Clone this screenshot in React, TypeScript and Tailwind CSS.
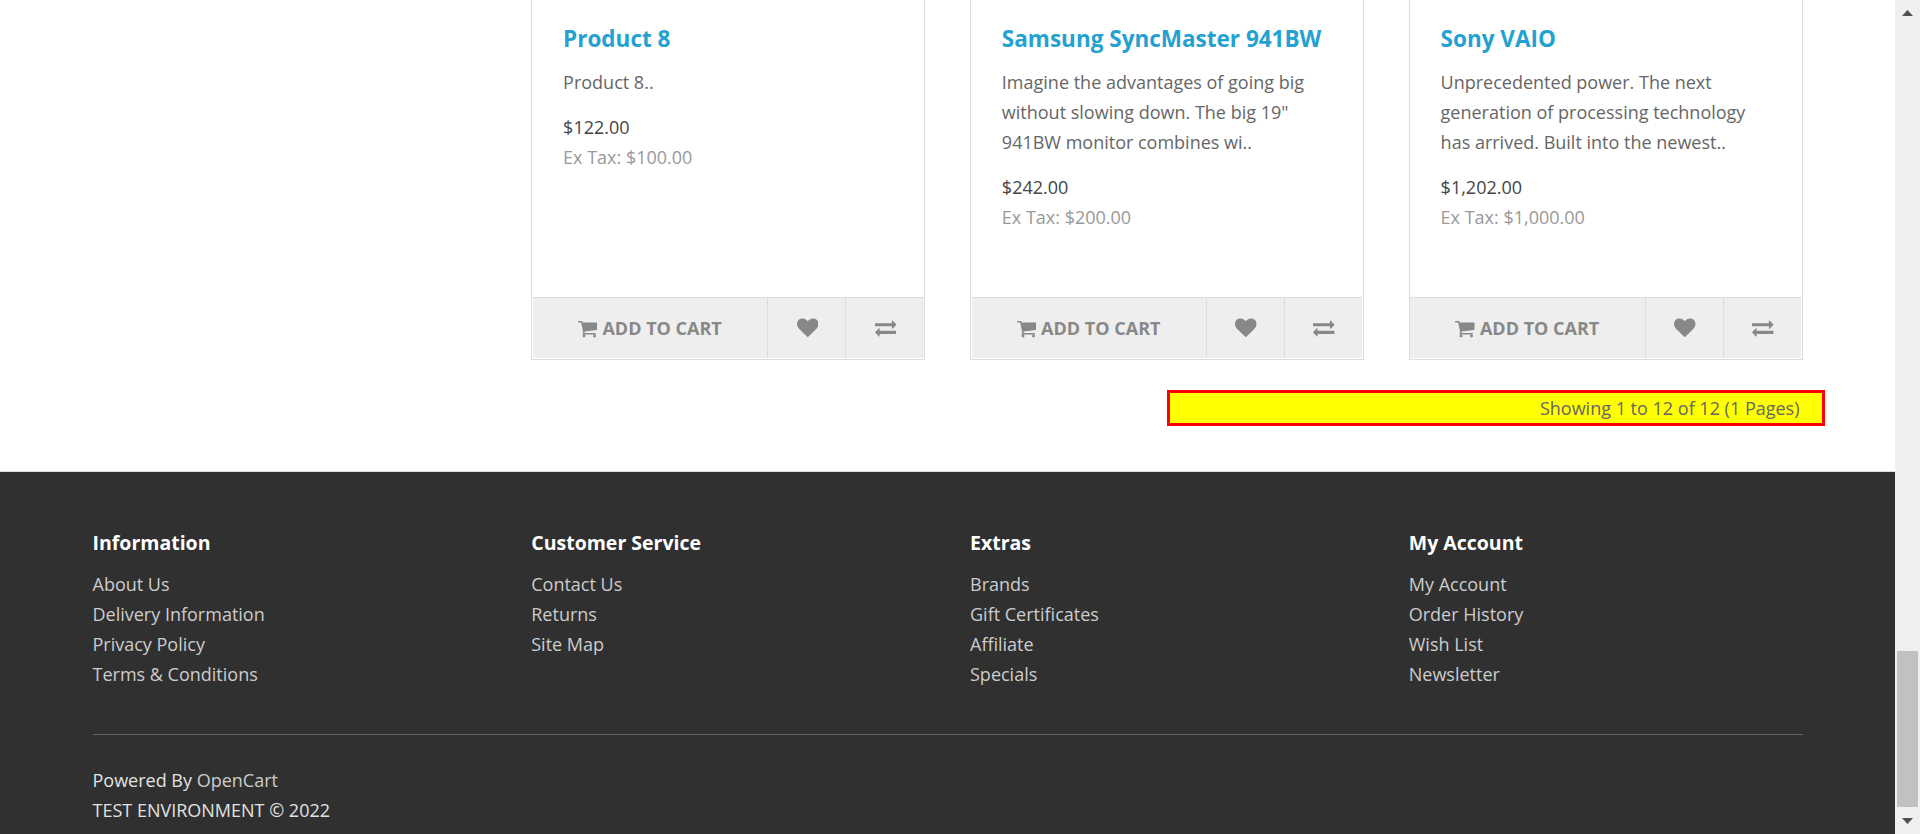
import React from 'react';

type Product = { name: string; text: string; price: string; tax: string };

const products: Product[] = [
  { name: 'Product 8', text: 'Product 8..', price: '$122.00', tax: 'Ex Tax: $100.00' },
  {
    name: 'Samsung SyncMaster 941BW',
    text: 'Imagine the advantages of going big without slowing down. The big 19" 941BW monitor combines wi..',
    price: '$242.00',
    tax: 'Ex Tax: $200.00',
  },
  {
    name: 'Sony VAIO',
    text: 'Unprecedented power. The next generation of processing technology has arrived. Built into the newest..',
    price: '$1,202.00',
    tax: 'Ex Tax: $1,000.00',
  },
];

const columns = [
  { title: 'Information', links: ['About Us', 'Delivery Information', 'Privacy Policy', 'Terms & Conditions'] },
  { title: 'Customer Service', links: ['Contact Us', 'Returns', 'Site Map'] },
  { title: 'Extras', links: ['Brands', 'Gift Certificates', 'Affiliate', 'Specials'] },
  { title: 'My Account', links: ['My Account', 'Order History', 'Wish List', 'Newsletter'] },
];

const CartIcon = () => (
  <svg viewBox="64 0 1664 1792" className="h-[21px] w-[19.5px] fill-current">
    <path d="M704 1536q0 52-38 90t-90 38-90-38-38-90 38-90 90-38 90 38 38 90zm896 0q0 52-38 90t-90 38-90-38-38-90 38-90 90-38 90 38 38 90zm128-1088v512q0 24-16.5 42.5t-40.5 21.5l-1044 122q13 60 13 70 0 16-24 64h920q26 0 45 19t19 45-19 45-45 19h-1024q-26 0-45-19t-19-45q0-11 8-31.5t16-36 21.5-40 15.5-29.5l-177-823h-204q-26 0-45-19t-19-45 19-45 45-19h256q16 0 28.5 6.5t19.5 15.5 13 24.5 8 26 5.5 29.5 4.5 26h1201q26 0 45 19t19 45z" />
  </svg>
);

const HeartIcon = () => (
  <svg viewBox="0 0 1792 1792" className="mb-px size-[21.5px] fill-current">
    <path d="M896 1664q-26 0-44-18l-624-602q-10-8-27.5-26t-55.5-65.5-68-97.5-53.5-121-23.5-138q0-220 127-344t351-124q62 0 126.5 21.5t120 58 95.5 68.5 76 68q36-36 76-68t95.5-68.5 120-58 126.5-21.5q224 0 351 124t127 344q0 221-229 450l-623 600q-18 18-44 18z" />
  </svg>
);

const ExchangeIcon = () => (
  <svg viewBox="0 0 1792 1792" className="size-[21.5px] fill-current">
    <path d="M1792 1184v192q0 13-9.5 22.5t-22.5 9.5h-1376v192q0 13-9.5 22.5t-22.5 9.5q-12 0-24-10l-319-320q-9-9-9-22 0-14 9-23l320-320q9-9 23-9 13 0 22.5 9.5t9.5 22.5v192h1376q13 0 22.5 9.5t9.5 22.5zm0-544q0 14-9 23l-320 320q-9 9-23 9-13 0-22.5-9.5t-9.5-22.5v-192h-1376q-13 0-22.5-9.5t-9.5-22.5v-192q0-13 9.5-22.5t22.5-9.5h1376v-192q0-14 9-23t23-9q12 0 24 10l319 319q9 9 9 23z" />
  </svg>
);

function ProductCard({ product }: { product: Product }) {
  return (
    <article className="group flex h-[360px] w-[393.75px] flex-col border border-t-0 border-[#ddd] pb-px last:w-[394px]">
      <div className="flex-1 pr-[29px] pl-[31px] pt-[26px]">
        <h4 className="mb-4 text-[22.5px] leading-[25px] font-bold whitespace-nowrap text-[#23a1d1]">{product.name}</h4>
        <p className="mb-[15px]">{product.text}</p>
        <p className="text-[#444]">{product.price}</p>
        <p className="text-[#999]">{product.tax}</p>
      </div>
      <div className="mr-px ml-px flex h-[61px] border-t border-[#ddd] bg-[#eee] text-[#888] group-first:mr-0 group-last:ml-0">
        <button className="flex w-[234px] items-center justify-center gap-[5px] pr-[0.5px] font-bold group-last:w-[235px] group-last:pr-0 group-last:pl-[0.5px]">
          <CartIcon />
          <span>ADD TO CART</span>
        </button>
        <button className="flex w-[78px] items-center justify-center border-l border-[#ddd] pl-[1.5px]">
          <HeartIcon />
        </button>
        <button className="flex w-[78px] shrink items-center justify-center border-l border-[#ddd] pl-[1.5px]">
          <ExchangeIcon />
        </button>
      </div>
    </article>
  );
}

function Scrollbar() {
  return (
    <aside className="flex h-full w-[25px] flex-col items-center bg-[#f0f0f0] pr-0.5 pl-0.5">
      <svg viewBox="0 0 11 6" className="mt-[10px] h-[6px] w-[11px] fill-[#505050]">
        <path d="M5.5 0L11 6H0z" />
      </svg>
      <div className="mt-[635px] h-[156px] w-[21px] bg-[#c1c1c1]" />
      <svg viewBox="0 0 11 6" className="mt-[11px] h-[6px] w-[11px] fill-[#505050]">
        <path d="M0 0h11L5.5 6z" />
      </svg>
    </aside>
  );
}

export default function App() {
  return (
    <div className="flex h-[834px] w-[1920px] overflow-hidden bg-white font-['Open_Sans',sans-serif] text-[18px] leading-[30px] text-[#666]">
      <div className="flex w-[1895px] flex-col">
        <main className="h-[471px]">
          <div className="flex gap-[45px] pl-[531.1px]">
            {products.map((p) => (
              <ProductCard key={p.name} product={p} />
            ))}
          </div>
          <div className="mt-[30px] ml-[1167px] h-[36px] w-[658px] border-3 border-[#f00] bg-[#ff0] pr-[22.5px] text-right">
            Showing 1 to 12 of 12 (1 Pages)
          </div>
        </main>
        <footer className="flex-1 border-t border-[#ddd] bg-[#303030] pr-[92px] pl-[92.5px] text-[#e2e2e2]">
          <div className="grid h-[262px] grid-cols-[438.75px_438.75px_438.75px_1fr] pt-[60px]">
            {columns.map((c) => (
              <section key={c.title}>
                <h5 className="mb-[15.5px] text-[19.5px] leading-[21.5px] font-bold text-white">{c.title}</h5>
                <ul className="text-[#ccc]">
                  {c.links.map((l) => (
                    <li key={l}>{l}</li>
                  ))}
                </ul>
              </section>
            ))}
          </div>
          <hr className="mb-[30px] border-t border-[#666]" />
          <p>
            Powered By <a className="text-[#ccc]">OpenCart</a>
            <br />
            TEST ENVIRONMENT © 2022
          </p>
        </footer>
      </div>
      <Scrollbar />
    </div>
  );
}
